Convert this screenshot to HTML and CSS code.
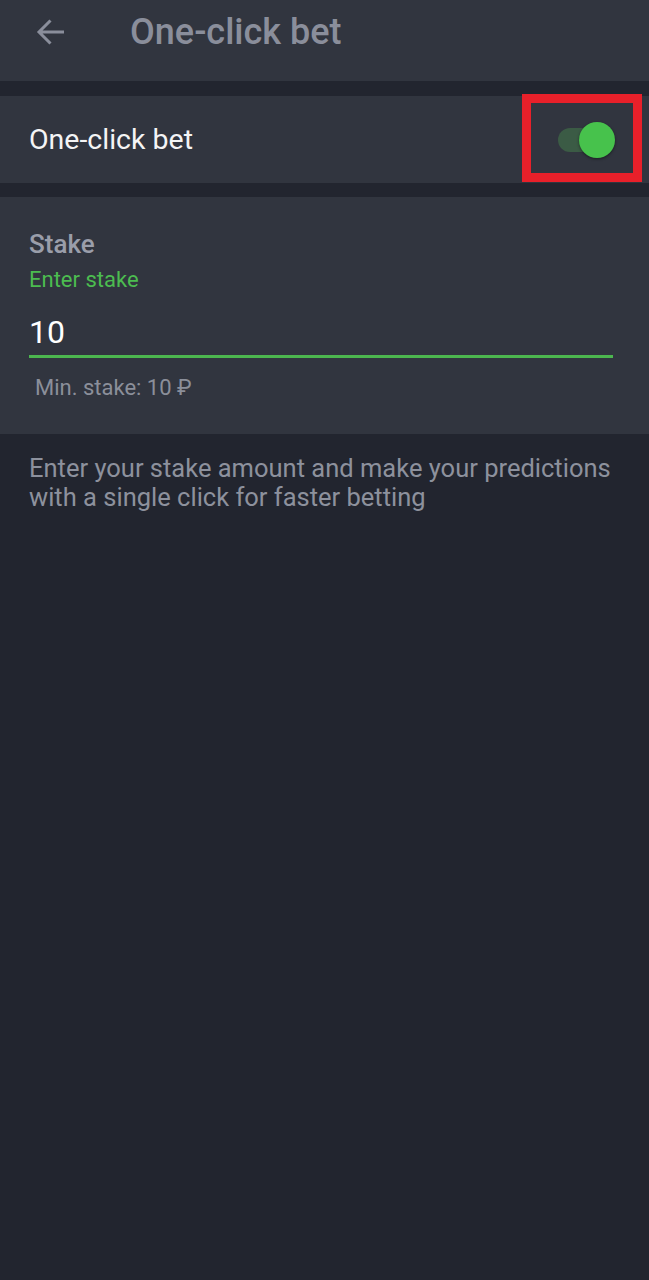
FILE: index.html
```html
<!DOCTYPE html>
<html lang="en">
<head>
  <meta charset="UTF-8">
  <meta name="viewport" content="width=device-width, initial-scale=1.0">
  <title>One-click bet</title>
  <link rel="stylesheet" href="styles.css">
</head>
<body>

<div class="app-bar">
  <button class="back-btn" aria-label="Back">
    <svg width="30" height="30" viewBox="0 0 30 30">
      <path d="M29 15H4M15.5 3.5L4 15l11.5 11.5" fill="none" stroke="#8a8e9b" stroke-width="3"/>
    </svg>
  </button>
  <h1 class="app-title">One-click bet</h1>
</div>

<div class="switch-row">
  <span class="switch-label">One-click bet</span>
  <div class="switch-wrap">
    <span class="switch on">
      <span class="switch-knob"></span>
    </span>
    <span class="highlight"></span>
  </div>
</div>

<div class="stake-panel">
  <div class="stake-title">Stake</div>
  <label class="stake-hint" for="stake">Enter stake</label>
  <input class="stake-input" id="stake" type="text" value="10">
  <div class="stake-min">Min. stake: 10 ₽</div>
</div>

<p class="note">Enter your stake amount and make your predictions with a single click for faster betting</p>

</body>
</html>
```

FILE: styles.css
```css
body {
  margin: 0;
  background-color: #22252f;
  font-family: Roboto, "Noto Sans", sans-serif;
  color: #fff;
}
.app-bar {
  height: 81px;
  box-sizing: border-box;
  padding-bottom: 17px;
  background-color: #31353f;
  display: flex;
  align-items: center;
}
.back-btn {
  background: none;
  border: none;
  padding: 0;
  margin: 0 0 0 35px;
  width: 30px;
  height: 30px;
  cursor: pointer;
  display: flex;
}
.app-title {
  margin: 0 0 0 65px;
  font-size: 36px;
  font-weight: 500;
  color: #8a8e9b;
  line-height: 1;
}
.switch-row {
  margin-top: 15px;
  height: 87px;
  background-color: #31353f;
  display: flex;
  align-items: center;
  justify-content: space-between;
  padding: 0 35px 0 29px;
}
.switch-label {
  font-size: 28.5px;
  color: #f4f4f5;
}
.switch-wrap {
  position: relative;
  display: flex;
  align-items: center;
}
.switch {
  position: relative;
  width: 56px;
  height: 24px;
  border-radius: 12px;
  background-color: #3b5b45;
  display: block;
}
.switch-knob {
  position: absolute;
  right: -1px;
  top: -6px;
  width: 36px;
  height: 36px;
  border-radius: 50%;
  background-color: #47c24c;
  box-shadow: 0 1px 3px rgba(0, 0, 0, 0.45);
}
.highlight {
  position: absolute;
  left: -36px;
  top: -34px;
  width: 102px;
  height: 70px;
  border: 9px solid #e8202a;
}
.stake-panel {
  margin-top: 14px;
  background-color: #31353f;
  padding: 32px 36px 34px 29px;
  display: flex;
  flex-direction: column;
}
.stake-title {
  font-size: 26px;
  font-weight: 500;
  color: #9a9eaa;
  line-height: 30px;
}
.stake-hint {
  font-size: 22px;
  color: #4cbc50;
  line-height: 26px;
  margin-top: 8px;
}
.stake-input {
  background: none;
  border: none;
  border-bottom: 3px solid #4cb64f;
  color: #fff;
  font-family: inherit;
  font-size: 32px;
  line-height: 38px;
  height: 38px;
  box-sizing: content-box;
  padding: 20px 0 4px;
  margin: 0;
  outline: none;
}
.stake-min {
  font-size: 22px;
  line-height: 24px;
  color: #8b8f9a;
  margin: 18px 0 0 6px;
}
.note {
  margin: 20px 29px;
  font-size: 25.5px;
  line-height: 29px;
  color: #8d919d;
}
```
